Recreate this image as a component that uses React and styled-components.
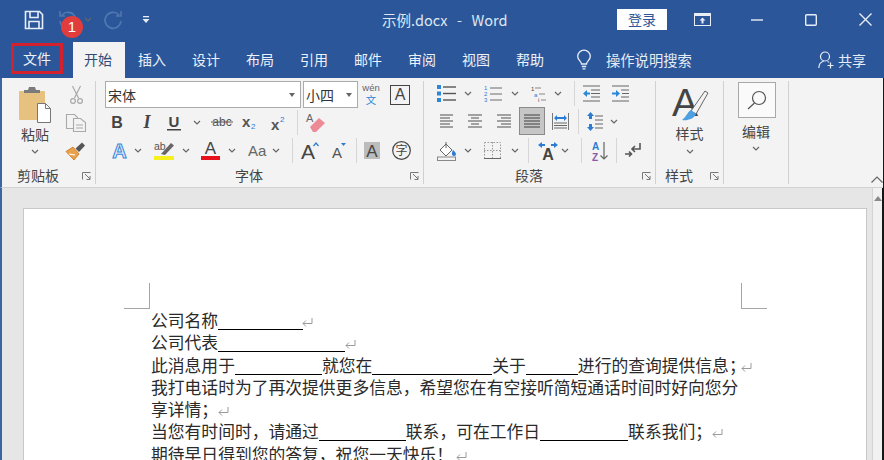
import React from 'react';
import styled, { createGlobalStyle } from 'styled-components';

const UI_FONT = '"Noto Sans CJK SC", "Liberation Sans", sans-serif';

const Global = createGlobalStyle`
  html, body { margin: 0; padding: 0; background: #111; overflow: hidden; }
  * { box-sizing: border-box; }
  svg { overflow: visible; }
`;

const Screen = styled.div`
  position: relative;
  width: 884px;
  height: 460px;
  overflow: hidden;
  font-family: ${UI_FONT};
  background: #161616;
`;

const TitleBar = styled.div`
  display: flex;
  align-items: center;
  height: 42px;
  padding: 0 0 3px 2px;
  background: #2b579a;
  color: #e6ecf5;
`;

const Qat = styled.span`
  display: inline-flex;
  flex: none;
  margin-left: ${p => p.$ml}px;
`;

const DocTitle = styled.div`
  margin-left: 232px;
  font-size: 14.5px;
  word-spacing: 1.5px;
  white-space: pre;
  color: #dfe6f1;
`;

const TitleRight = styled.div`
  display: flex;
  align-items: center;
  margin-left: auto;
  padding-right: 12px;
`;

const Login = styled.button`
  width: 50px;
  height: 21px;
  padding: 0;
  border: 0;
  background: #fff;
  color: #2b579a;
  font-family: inherit;
  font-size: 14px;
  line-height: 21px;
`;

const Badge = styled.div`
  position: absolute;
  left: 61px;
  top: 16px;
  width: 22px;
  height: 22px;
  border-radius: 50%;
  background: #e23d3d;
  color: #fff;
  font: 15px/22px "Liberation Sans", sans-serif;
  text-align: center;
`;

const TabRow = styled.div`
  display: flex;
  align-items: flex-start;
  height: 36px;
  padding-left: 2px;
  background: #2b579a;
`;

const FileTab = styled.div`
  width: 52px;
  height: 31px;
  margin: 1px 0 0 9px;
  border: 3px solid #d3212d;
  color: #eef2f8;
  font-size: 14px;
  line-height: 24px;
  text-align: center;
`;

const Tab = styled.div`
  flex: none;
  width: ${p => (p.$active ? 52 : 54)}px;
  height: ${p => (p.$active ? 36 : 35)}px;
  margin-left: ${p => (p.$active ? 10 : 0)}px;
  padding-right: ${p => (p.$active ? 2 : 0)}px;
  background: ${p => (p.$active ? '#f3f3f3' : 'transparent')};
  color: ${p => (p.$active ? '#2f4a75' : '#eef2f8')};
  font-size: 14px;
  line-height: 35px;
  text-align: center;
`;

const SearchHint = styled.div`
  display: flex;
  align-items: center;
  height: 35px;
  margin-left: 20px;
  gap: 15px;
  color: #e6ecf5;
  font-size: 14.3px;
`;

const Share = styled.div`
  display: flex;
  align-items: center;
  height: 35px;
  margin-left: auto;
  padding-right: 18px;
  gap: 3px;
  color: #e6ecf5;
  font-size: 14px;
`;

const Ribbon = styled.div`
  display: flex;
  height: 110px;
  margin-right: 1px;
  padding-top: 3px;
  border-left: 2px solid #3d659f;
  border-bottom: 1px solid #d2d2d2;
  background: #f3f3f3;
  color: #444;
`;

const Group = styled.div`
  flex: none;
  display: flex;
  flex-direction: column;
  width: ${p => p.$w}px;
  height: 103px;
  border-right: 1px solid #d0d0d0;
`;

const GroupBody = styled.div`
  display: flex;
  height: 86px;
  flex-direction: ${p => (p.$stack ? 'column' : 'row')};
  align-items: ${p => (p.$center ? 'center' : 'stretch')};
  padding-left: ${p => p.$pl || 0}px;
`;

const GroupFoot = styled.div`
  display: flex;
  align-items: center;
  height: 17px;
  padding-right: 4px;
`;

const GroupLabel = styled.div`
  flex: 1;
  font-size: 14px;
  line-height: 17px;
  text-align: center;
`;

const Launcher = styled.span`
  display: inline-flex;
  margin-left: 8px;
`;

const PasteCol = styled.div`
  display: flex;
  flex-direction: column;
  align-items: center;
  width: 66px;
  padding-top: 6px;
`;

const SmallCol = styled.div`
  display: flex;
  flex-direction: column;
  align-items: center;
  width: 24px;
  margin-left: -4px;
`;

const SmallCell = styled.div`
  display: flex;
  align-items: center;
  justify-content: center;
  height: 28px;
`;

const BigLabel = styled.div`
  margin-top: ${p => p.$mt}px;
  font-size: 14px;
  line-height: 16px;
`;

const ChevCell = styled.div`
  display: flex;
  margin-top: ${p => p.$mt}px;
`;

const Row = styled.div`
  display: flex;
  align-items: center;
  flex: none;
  height: ${p => p.$h}px;
`;

const Tool = styled.span`
  flex: none;
  display: inline-flex;
  align-items: center;
  justify-content: center;
  width: ${p => p.$w}px;
  margin-left: ${p => p.$ml || 0}px;
`;

const Sep = styled.span`
  flex: none;
  width: 1px;
  height: 25px;
  margin-left: ${p => p.$ml}px;
  background: #d6d6d6;
`;

const Select = styled.div`
  flex: none;
  display: flex;
  align-items: center;
  justify-content: space-between;
  width: ${p => p.$w}px;
  height: 27px;
  margin-left: ${p => p.$ml || 0}px;
  padding: 0 5px 0 2px;
  border: 1px solid #ababab;
  background: #fff;
  color: #333;
  font-size: 14px;
`;

const CaretDown = styled.span`
  width: 0;
  height: 0;
  border-left: 3.5px solid transparent;
  border-right: 3.5px solid transparent;
  border-top: 4px solid #666;
`;

const BoxedA = styled.span`
  flex: none;
  width: 20px;
  height: 20px;
  margin-left: 10px;
  border: 1px solid #444;
  color: #444;
  font: 16px/18px "Liberation Sans", sans-serif;
  text-align: center;
`;

const ActiveTool = styled.span`
  flex: none;
  display: inline-flex;
  align-items: center;
  justify-content: center;
  width: 26px;
  height: 28px;
  margin-left: 8px;
  border: 1px solid #8a8a8a;
  background: #c6c6c6;
`;

const StyleIcon = styled.div`
  display: flex;
  margin-top: 6px;
`;

const FindBox = styled.div`
  display: flex;
  align-items: center;
  justify-content: center;
  width: 38px;
  height: 36px;
  margin: 1px 0 0 1px;
  border: 1px solid #a8a8a8;
  background: #fafafa;
`;

const Collapse = styled.span`
  display: inline-flex;
  align-self: flex-end;
  margin: 0 0 4px auto;
`;

const Workspace = styled.div`
  display: flex;
  height: 272px;
  margin-right: 2px;
  border-left: 2px solid #3d659f;
  background: #e6e6e6;
`;

const DocArea = styled.div`
  flex: 1;
  padding: 20px 0 0 21px;
  overflow: hidden;
`;

const ScrollTrack = styled.div`
  display: flex;
  justify-content: center;
  width: 10px;
  padding-top: 8px;
  border-left: 1px solid #d4d4d4;
  background: #f1f1f1;
`;

const ScrollUp = styled.span`
  width: 0;
  height: 0;
  border-left: 4px solid transparent;
  border-right: 4px solid transparent;
  border-bottom: 5px solid #8a8a8a;
`;

const Page = styled.div`
  position: relative;
  width: 844px;
  height: 300px;
  padding: 100px 0 0 127px;
  border: 1px solid #c8c8c8;
  background: #fff;
  color: #2a2a2a;
  font-size: 16.8px;
  line-height: 22.3px;
`;

const Crop = styled.span`
  position: absolute;
  top: 74px;
  width: 26px;
  height: 26px;
  border-bottom: 1px solid #a6a6a6;
  ${p => (p.$side === 'left' ? 'left: 100px; border-right: 1px solid #a6a6a6;' : 'left: 717px; border-left: 1px solid #a6a6a6;')}
`;

const Line = styled.div`
  white-space: nowrap;
`;

const Blank = styled.span`
  display: inline-block;
  width: ${p => p.$w}px;
  height: 1px;
  background: #000;
  vertical-align: -3px;
`;

const Mark = styled.svg`
  display: inline-block;
  width: 13px;
  height: 10px;
  margin-left: ${p => p.$ml}px;
  vertical-align: 0;
`;

const Ret = ({ ml }) => (
  <Mark $ml={ml} viewBox="0 0 13 10" fill="none" stroke="#9a9a9a" strokeWidth="1">
    <path d="M11 1v5.5H2M5 3.5 2 6.5l3 3" />
  </Mark>
);

const svgText = { fontFamily: '"Liberation Sans", sans-serif' };

const Chev = () => (
  <svg width="8" height="5" viewBox="0 0 8 5" fill="none" stroke="#666" strokeWidth="1.2"><path d="M1 1l3 3 3-3" /></svg>
);

const Launch = () => (
  <svg width="9" height="8" viewBox="0 0 9 8" fill="none" stroke="#777" strokeWidth="1"><path d="M.5 7.5v-7h8M3 2l5 5M8 4v3.5H4.5" /></svg>
);

const SaveIcon = () => (
  <svg width="20" height="20" viewBox="0 0 20 20" fill="none" stroke="#e8eef7" strokeWidth="1.6"><path d="M1.5 1.5h14l3 3v14h-17zM6 1.5v6h8v-6M5 18.5v-7h10v7" /></svg>
);

const UndoIcon = () => (
  <svg width="20" height="20" viewBox="0 0 20 20" fill="none" stroke="#5077b2" strokeWidth="1.6"><path d="M4 5a8 8 0 1 1-2 6M2 1v5h5" /></svg>
);

const RedoIcon = () => (
  <svg width="20" height="20" viewBox="0 0 20 20" fill="none" stroke="#5077b2" strokeWidth="1.6"><path d="M16 5a8 8 0 1 0 2 6M18 1v5h-5" /></svg>
);

const QatMore = () => (
  <svg width="8" height="8" viewBox="0 0 8 8" fill="#e8eef7"><rect x="1" y="0" width="6" height="1.3" /><path d="M.5 3h7L4 7z" /></svg>
);

const RibbonDisplay = () => (
  <svg width="17" height="13" viewBox="0 0 17 13"><rect x=".5" y=".5" width="16" height="12" fill="#2b579a" stroke="#e8eef7" /><rect x="0" y="0" width="17" height="3" fill="#e8eef7" /><path d="M8.5 4.5 5.5 7.5h2v3h2v-3h2z" fill="#e8eef7" /></svg>
);

const MinIcon = () => (
  <svg width="12" height="12" viewBox="0 0 12 12" stroke="#e8eef7" strokeWidth="1.4"><path d="M0 6h12" /></svg>
);

const MaxIcon = () => (
  <svg width="12" height="12" viewBox="0 0 12 12" fill="none" stroke="#e8eef7" strokeWidth="1.4"><rect x=".7" y=".7" width="10.6" height="10.6" rx="1" /></svg>
);

const CloseIcon = () => (
  <svg width="13" height="13" viewBox="0 0 13 13" stroke="#e8eef7" strokeWidth="1.4"><path d="M.5.5l12 12M12.5.5l-12 12" /></svg>
);

const BulbIcon = () => (
  <svg width="14" height="20" viewBox="0 0 14 20" fill="none" stroke="#e8eef7" strokeWidth="1.3"><path d="M4.5 14c0-2.5-3.8-4-3.8-7.5a6.3 6.3 0 0 1 12.6 0c0 3.5-3.8 5-3.8 7.5zM4.8 16.5h4.4M5.5 18.8h3" /></svg>
);

const ShareIcon = () => (
  <svg width="17" height="18" viewBox="0 0 17 18" fill="none" stroke="#e8eef7" strokeWidth="1.2"><circle cx="7" cy="5.5" r="4.5" /><path d="M.8 17c0-3.5 2-6 5-7M9.5 10.5c.6.2 1.2.5 1.6.9M12.5 11.5v6M9.5 14.5h6" /></svg>
);

const PasteIcon = () => (
  <svg width="32" height="36" viewBox="0 0 32 36">
    <rect x="0" y="4" width="26" height="29" rx="1" fill="#e6c17f" />
    <path d="M5 6V3h4l1-3h6l1 3h4v3z" fill="#7b7b7b" />
    <path d="M18.5 16.5h8l5 5v14h-13z" fill="#fff" stroke="#777" />
    <path d="M26.5 16.5v5h5" fill="none" stroke="#777" />
  </svg>
);

const CutIcon = () => (
  <svg width="13" height="18" viewBox="0 0 13 18" fill="none" stroke="#a9a9a9" strokeWidth="1.2"><path d="M2.5 0l6 12M10.5 0l-6 12" /><circle cx="3" cy="15" r="2.4" /><circle cx="10" cy="15" r="2.4" /></svg>
);

const CopyIcon = () => (
  <svg width="20" height="18" viewBox="0 0 20 18" fill="#f3f3f3" stroke="#a9a9a9" strokeWidth="1.1"><path d="M.5.5h8l3 3v11h-11z" /><path d="M7.5 4.5h7l5 4v9h-12z" /><path d="M10 11h7M10 14h7" /></svg>
);

const PainterIcon = () => (
  <svg width="20" height="18" viewBox="0 0 20 18">
    <path d="M0 9.5 7 5l6 7-5 6z" fill="#e9a24b" stroke="#c8741c" strokeWidth=".8" />
    <path d="M3 12l6 1" stroke="#fff" strokeWidth="1.2" />
    <path d="M9.5 6.5 16 .5l3 3-6 6.5z" fill="#555" />
  </svg>
);

const Letter = ({ w, h = 18, size, weight, italic, under, color = '#444', ch, y }) => (
  <svg width={w} height={h} viewBox={`0 0 ${w} ${h}`}>
    <text x={w / 2} y={y || h - 3} textAnchor="middle" fontSize={size} fontWeight={weight} fontStyle={italic ? 'italic' : 'normal'} fill={color} style={{ ...svgText, fontFamily: italic ? '"Liberation Serif", serif' : svgText.fontFamily }}>{ch}</text>
    {under && <rect x="1" y={h - 2} width={w - 2} height="1.5" fill={color} />}
  </svg>
);

const AbcIcon = () => (
  <svg width="22" height="14" viewBox="0 0 22 14">
    <text x="11" y="11" textAnchor="middle" fontSize="12" fill="#555" style={svgText}>abc</text>
    <path d="M0 7h22" stroke="#555" strokeWidth="1" />
  </svg>
);

const SubIcon = () => (
  <svg width="16" height="16" viewBox="0 0 16 16">
    <text x="0" y="13" fontSize="15" fontWeight="700" fill="#555" style={svgText}>x</text>
    <text x="9" y="15" fontSize="8" fill="#2b7cd3" style={svgText}>2</text>
  </svg>
);

const SupIcon = () => (
  <svg width="16" height="17" viewBox="0 0 16 17">
    <text x="0" y="16" fontSize="15" fontWeight="700" fill="#555" style={svgText}>x</text>
    <text x="9" y="8" fontSize="8" fill="#2b7cd3" style={svgText}>2</text>
  </svg>
);

const EraserIcon = () => (
  <svg width="19" height="20" viewBox="0 0 19 20">
    <text x="0" y="10" fontSize="11" fill="#666" style={svgText}>A</text>
    <path d="M4 15 13 6l6 5-9 9H7z" fill="#ec8a96" />
  </svg>
);

const OutlineA = () => (
  <svg width="17" height="19" viewBox="0 0 17 19">
    <text x="8.5" y="17" textAnchor="middle" fontSize="20" fontWeight="700" fill="#dfeafa" stroke="#3a86d8" strokeWidth="1" style={svgText}>A</text>
  </svg>
);

const HighlightIcon = () => (
  <svg width="21" height="20" viewBox="0 0 21 20">
    <text x="0" y="10" fontSize="10.5" fill="#555" style={svgText}>ab</text>
    <path d="M7 14 17 3l3 2.5L11 15z" fill="#666" />
    <rect x="0" y="16" width="20" height="4" fill="#f6f01e" />
  </svg>
);

const ColorA = () => (
  <svg width="19" height="20" viewBox="0 0 19 20">
    <text x="9.5" y="14" textAnchor="middle" fontSize="17" fill="#444" style={svgText}>A</text>
    <rect x="0" y="16" width="19" height="4" fill="#e8101c" />
  </svg>
);

const CaseIcon = () => (
  <svg width="17" height="16" viewBox="0 0 17 16"><text x="0" y="14" fontSize="15" fill="#666" style={svgText}>Aa</text></svg>
);

const GrowA = () => (
  <svg width="18" height="21" viewBox="0 0 18 21">
    <text x="0" y="19" fontSize="21" fill="#444" style={svgText}>A</text>
    <path d="M12.5 6 15 3l2.5 3" fill="none" stroke="#2b7cd3" strokeWidth="1.2" />
  </svg>
);

const ShrinkA = () => (
  <svg width="14" height="18" viewBox="0 0 14 18">
    <text x="0" y="17" fontSize="15" fill="#555" style={svgText}>A</text>
    <path d="M9 2h5l-2.5 3z" fill="#2b7cd3" />
  </svg>
);

const ShadedA = () => (
  <svg width="16" height="17" viewBox="0 0 16 17">
    <rect width="16" height="17" fill="#bcbcbc" />
    <text x="8" y="15" textAnchor="middle" fontSize="17" fill="#444" style={svgText}>A</text>
  </svg>
);

const CircleChar = () => (
  <svg width="19" height="19" viewBox="0 0 19 19">
    <circle cx="9.5" cy="9.5" r="8.8" fill="none" stroke="#444" strokeWidth="1.2" />
    <text x="9.5" y="14" textAnchor="middle" fontSize="12" fill="#444" style={{ fontFamily: UI_FONT }}>字</text>
  </svg>
);

const Lines = ({ w, rows, color = '#6a6a6a' }) => {
  const h = rows[rows.length - 1][2] + 1;
  return (
    <svg width={w} height={h} viewBox={`0 0 ${w} ${h}`} stroke={color} strokeWidth="1.2">
      {rows.map(([a, b, y]) => <path key={y} d={`M${a} ${y}H${b}`} />)}
    </svg>
  );
};

const BulletsIcon = () => (
  <svg width="19" height="17" viewBox="0 0 19 17">
    {[0, 6.5, 13].map(y => (
      <g key={y}>
        <rect x="0" y={y} width="4" height="4" fill="#2b88d8" />
        <path d={`M6 ${y + 2}h13`} stroke="#555" strokeWidth="1.4" />
      </g>
    ))}
  </svg>
);

const NumbersIcon = () => (
  <svg width="18" height="17" viewBox="0 0 18 17" style={svgText}>
    {['1', '2', '3'].map((n, i) => (
      <g key={n}>
        <text x="0" y={5 + i * 6} fontSize="6" fill="#2b7cd3">{n}</text>
        <path d={`M6 ${3 + i * 6}h12`} stroke="#777" strokeWidth="1.1" />
      </g>
    ))}
  </svg>
);

const MultiIcon = () => (
  <svg width="17" height="17" viewBox="0 0 17 17" style={svgText}>
    <text x="0" y="6" fontSize="6" fill="#444">1</text>
    <path d="M4 3h6" stroke="#888" />
    <text x="3" y="11.5" fontSize="6" fill="#2b7cd3">a</text>
    <path d="M8 9h6" stroke="#888" />
    <text x="7" y="17" fontSize="6" fill="#444">i</text>
    <path d="M10 15h5" stroke="#888" />
  </svg>
);

const OutdentIcon = () => (
  <svg width="17" height="17" viewBox="0 0 17 17">
    <path d="M0 1h17M8 5h9M8 8.5h9M8 12h9M0 16h17" stroke="#666" strokeWidth="1.1" />
    <path d="M0 8.5 4 5v2.5h3v2H4V12z" fill="#2b88d8" />
  </svg>
);

const IndentIcon = () => (
  <svg width="17" height="17" viewBox="0 0 17 17">
    <path d="M0 1h17M9 5h8M10 8.5h7M9 12h8M0 16h17" stroke="#666" strokeWidth="1.1" />
    <path d="M8 8.5 4 5v2.5H0v2h4V12z" fill="#2b88d8" />
  </svg>
);

const DistributeIcon = () => (
  <svg width="17" height="17" viewBox="0 0 17 17">
    <path d="M.5 0v17M16.5 0v17" stroke="#777" />
    <path d="M2 5 5 2v2h7V2l3 3-3 3V6H5v2z" fill="#2b7cd3" />
    <path d="M2 10h13M2 12.5h13M2 15h13" stroke="#666" />
  </svg>
);

const SpacingIcon = () => (
  <svg width="16" height="19" viewBox="0 0 16 19">
    <path d="M3.5 0 7 4H5v3H2V4H0zM3.5 19 7 15H5v-3H2v3H0z" fill="#2b7cd3" />
    <path d="M8 4h8M8 8h8M8 12h8M8 16h8" stroke="#666" strokeWidth="1.2" />
  </svg>
);

const ShadeIcon = () => (
  <svg width="20" height="20" viewBox="0 0 20 20">
    <path d="M3 9 9 3l6 6-6 6z" fill="#fff" stroke="#666" />
    <path d="M9 1v6" stroke="#666" />
    <path d="M16 9c2 2 3 3 3 4a2 2 0 0 1-4 0c0-1 0-2 1-4z" fill="#2b7cd3" />
    <rect x=".5" y="16" width="18" height="3.5" fill="#f3f3f3" stroke="#888" />
  </svg>
);

const BordersIcon = () => (
  <svg width="17" height="17" viewBox="0 0 17 17" fill="none" stroke="#999" strokeDasharray="1.5 1.5">
    <rect x=".5" y=".5" width="16" height="16" />
    <path d="M8.5 0v17M0 8.5h17" />
    <path d="M0 16.5h17" strokeDasharray="none" stroke="#666" />
  </svg>
);

const TextDirIcon = () => (
  <svg width="20" height="18" viewBox="0 0 20 18">
    <path d="M0 3 4 0v2h3v2H4v2zM20 3l-4-3v2h-3v2h3v2z" fill="#2b7cd3" />
    <text x="10" y="18" textAnchor="middle" fontSize="16" fontWeight="700" fill="#444" style={svgText}>A</text>
  </svg>
);

const SortIcon = () => (
  <svg width="16" height="20" viewBox="0 0 16 20" style={svgText}>
    <text x="0" y="9" fontSize="10" fontWeight="700" fill="#2b7cd3">A</text>
    <text x="0" y="19.5" fontSize="10" fontWeight="700" fill="#8a5aa8">Z</text>
    <path d="M12 1v17M8.5 14.5 12 18l3.5-3.5" fill="none" stroke="#666" strokeWidth="1.2" />
  </svg>
);

const PilcrowIcon = () => (
  <svg width="16" height="15" viewBox="0 0 16 15" fill="none" stroke="#555" strokeWidth="1.6">
    <path d="M15 0v6H7M10 3 7 6l3 3" />
    <path d="M0 11h6M4 8.5 6.5 11 4 13.5" />
  </svg>
);

const StylesIcon = () => (
  <svg width="36" height="34" viewBox="0 0 36 34">
    <text x="0" y="29" fontSize="39" fill="#444" style={svgText}>A</text>
    <path d="M19 24 33 4l3 2-12 21z" fill="#f3f3f3" stroke="#666" />
    <path d="M10 33c5 1 12-1 14-6l-5-4c-3 1-4 6-9 10z" fill="#4f9fe3" />
  </svg>
);

const FindIcon = () => (
  <svg width="20" height="20" viewBox="0 0 20 20" fill="none" stroke="#555" strokeWidth="1.2"><circle cx="12" cy="8" r="6.5" /><path d="M7.5 13 1 19" /></svg>
);

const WenIcon = () => (
  <svg width="18" height="24" viewBox="0 0 18 24">
    <text x="9" y="8" textAnchor="middle" fontSize="9.5" fill="#666" style={svgText}>wén</text>
    <text x="9" y="21" textAnchor="middle" fontSize="10.5" fill="#2b88d8" style={{ fontFamily: UI_FONT }}>文</text>
  </svg>
);

const CollapseIcon = () => (
  <svg width="12" height="7" viewBox="0 0 12 7" fill="none" stroke="#666" strokeWidth="1.2"><path d="M.5 6.5 6 1l5.5 5.5" /></svg>
);

const L_LEFT = [[0, 13, 1], [0, 10, 4], [0, 13, 7], [0, 10, 10], [0, 13, 13]];
const L_CENTER = [[0, 14, 1], [3, 11, 4], [0, 14, 7], [3, 11, 10], [0, 14, 13]];
const L_RIGHT = [[0, 14, 1], [4, 14, 4], [0, 14, 7], [4, 14, 10], [0, 14, 13]];
const L_FULL = [[0, 16, 1], [0, 16, 4], [0, 16, 7], [0, 16, 10], [0, 16, 13]];

const TABS = ['插入', '设计', '布局', '引用', '邮件', '审阅', '视图', '帮助'];

export default function App() {
  return (
    <Screen>
      <Global />
      <TitleBar>
        <Qat $ml={22}><SaveIcon /></Qat>
        <Qat $ml={14}><UndoIcon /></Qat>
        <Qat $ml={6}><Chev /></Qat>
        <Qat $ml={11}><RedoIcon /></Qat>
        <Qat $ml={19}><QatMore /></Qat>
        <DocTitle>示例.docx  -  Word</DocTitle>
        <TitleRight>
          <Login>登录</Login>
          <Qat $ml={27}><RibbonDisplay /></Qat>
          <Qat $ml={40}><MinIcon /></Qat>
          <Qat $ml={42}><MaxIcon /></Qat>
          <Qat $ml={42}><CloseIcon /></Qat>
        </TitleRight>
      </TitleBar>
      <Badge>1</Badge>

      <TabRow>
        <FileTab>文件</FileTab>
        <Tab $active>开始</Tab>
        {TABS.map(t => <Tab key={t}>{t}</Tab>)}
        <SearchHint><BulbIcon />操作说明搜索</SearchHint>
        <Share><ShareIcon />共享</Share>
      </TabRow>

      <Ribbon>
        <Group $w={94}>
          <GroupBody>
            <PasteCol>
              <PasteIcon />
              <BigLabel $mt={3}>粘贴</BigLabel>
              <ChevCell $mt={7}><Chev /></ChevCell>
            </PasteCol>
            <SmallCol>
              <SmallCell><CutIcon /></SmallCell>
              <SmallCell><CopyIcon /></SmallCell>
              <SmallCell><PainterIcon /></SmallCell>
            </SmallCol>
          </GroupBody>
          <GroupFoot><GroupLabel>剪贴板</GroupLabel><Launcher><Launch /></Launcher></GroupFoot>
        </Group>

        <Group $w={328}>
          <GroupBody $stack $pl={9}>
            <Row $h={27}>
              <Select $w={196}>宋体<CaretDown /></Select>
              <Select $w={55} $ml={2}>小四<CaretDown /></Select>
              <Tool $w={18} $ml={4}><WenIcon /></Tool>
              <BoxedA>A</BoxedA>
            </Row>
            <Row $h={28}>
              <Tool $w={16} $ml={4}><Letter w={16} size={16} weight={700} ch="B" /></Tool>
              <Tool $w={16} $ml={14}><Letter w={16} size={18} weight={700} italic ch="I" /></Tool>
              <Tool $w={16} $ml={11}><Letter w={16} size={15} weight={700} under ch="U" y={14} /></Tool>
              <Tool $w={8} $ml={11}><Chev /></Tool>
              <Tool $w={22} $ml={10}><AbcIcon /></Tool>
              <Tool $w={16} $ml={9}><SubIcon /></Tool>
              <Tool $w={16} $ml={13}><SupIcon /></Tool>
              <Sep $ml={10} />
              <Tool $w={19} $ml={8}><EraserIcon /></Tool>
            </Row>
            <Row $h={28}>
              <Tool $w={17} $ml={6}><OutlineA /></Tool>
              <Tool $w={8} $ml={6}><Chev /></Tool>
              <Tool $w={21} $ml={12}><HighlightIcon /></Tool>
              <Tool $w={8} $ml={7}><Chev /></Tool>
              <Tool $w={19} $ml={11}><ColorA /></Tool>
              <Tool $w={8} $ml={8}><Chev /></Tool>
              <Tool $w={17} $ml={12}><CaseIcon /></Tool>
              <Tool $w={8} $ml={7}><Chev /></Tool>
              <Sep $ml={12} />
              <Tool $w={18} $ml={8}><GrowA /></Tool>
              <Tool $w={14} $ml={13}><ShrinkA /></Tool>
              <Sep $ml={10} />
              <Tool $w={16} $ml={7}><ShadedA /></Tool>
              <Tool $w={19} $ml={12}><CircleChar /></Tool>
            </Row>
          </GroupBody>
          <GroupFoot><GroupLabel>字体</GroupLabel><Launcher><Launch /></Launcher></GroupFoot>
        </Group>

        <Group $w={232}>
          <GroupBody $stack>
            <Row $h={24}>
              <Tool $w={19} $ml={13}><BulletsIcon /></Tool>
              <Tool $w={8} $ml={8}><Chev /></Tool>
              <Tool $w={18} $ml={12}><NumbersIcon /></Tool>
              <Tool $w={8} $ml={9}><Chev /></Tool>
              <Tool $w={17} $ml={12}><MultiIcon /></Tool>
              <Tool $w={8} $ml={6}><Chev /></Tool>
              <Sep $ml={12} />
              <Tool $w={17} $ml={8}><OutdentIcon /></Tool>
              <Tool $w={17} $ml={12}><IndentIcon /></Tool>
            </Row>
            <Row $h={32}>
              <Tool $w={13} $ml={16}><Lines w={13} rows={L_LEFT} /></Tool>
              <Tool $w={14} $ml={15}><Lines w={14} rows={L_CENTER} /></Tool>
              <Tool $w={14} $ml={15}><Lines w={14} rows={L_RIGHT} /></Tool>
              <ActiveTool><Lines w={16} rows={L_FULL} color="#555" /></ActiveTool>
              <Tool $w={17} $ml={7}><DistributeIcon /></Tool>
              <Sep $ml={9} />
              <Tool $w={16} $ml={8}><SpacingIcon /></Tool>
              <Tool $w={8} $ml={7}><Chev /></Tool>
            </Row>
            <Row $h={27}>
              <Tool $w={20} $ml={13}><ShadeIcon /></Tool>
              <Tool $w={8} $ml={7}><Chev /></Tool>
              <Tool $w={17} $ml={12}><BordersIcon /></Tool>
              <Tool $w={8} $ml={10}><Chev /></Tool>
              <Sep $ml={9} />
              <Tool $w={20} $ml={9}><TextDirIcon /></Tool>
              <Tool $w={8} $ml={3}><Chev /></Tool>
              <Sep $ml={12} />
              <Tool $w={16} $ml={10}><SortIcon /></Tool>
              <Sep $ml={8} />
              <Tool $w={16} $ml={8}><PilcrowIcon /></Tool>
            </Row>
          </GroupBody>
          <GroupFoot><GroupLabel>段落</GroupLabel><Launcher><Launch /></Launcher></GroupFoot>
        </Group>

        <Group $w={68}>
          <GroupBody $stack $center>
            <StyleIcon><StylesIcon /></StyleIcon>
            <BigLabel $mt={4}>样式</BigLabel>
            <ChevCell $mt={8}><Chev /></ChevCell>
          </GroupBody>
          <GroupFoot><GroupLabel>样式</GroupLabel><Launcher><Launch /></Launcher></GroupFoot>
        </Group>

        <Group $w={65}>
          <GroupBody $stack $center>
            <FindBox><FindIcon /></FindBox>
            <BigLabel $mt={5}>编辑</BigLabel>
            <ChevCell $mt={7}><Chev /></ChevCell>
          </GroupBody>
        </Group>

        <Collapse><CollapseIcon /></Collapse>
      </Ribbon>

      <Workspace>
        <DocArea>
          <Page>
            <Crop $side="left" />
            <Crop $side="right" />
            <Line>公司名称<Blank $w={85} /><Ret ml={-2} /></Line>
            <Line>公司代表<Blank $w={127} /><Ret ml={-1} /></Line>
            <Line>此消息用于<Blank $w={87} />就您在<Blank $w={120} />关于<Blank $w={52} />进行的查询提供信息；<Ret ml={-6} /></Line>
            <Line>我打电话时为了再次提供更多信息，希望您在有空接听简短通话时间时好向您分</Line>
            <Line>享详情；<Ret ml={-1} /></Line>
            <Line>当您有时间时，请通过<Blank $w={87} />联系，可在工作日<Blank $w={88} />联系我们；<Ret ml={-1} /></Line>
            <Line>期待早日得到您的答复，祝您一天快乐！<Ret ml={2} /></Line>
          </Page>
        </DocArea>
        <ScrollTrack><ScrollUp /></ScrollTrack>
      </Workspace>
    </Screen>
  );
}
